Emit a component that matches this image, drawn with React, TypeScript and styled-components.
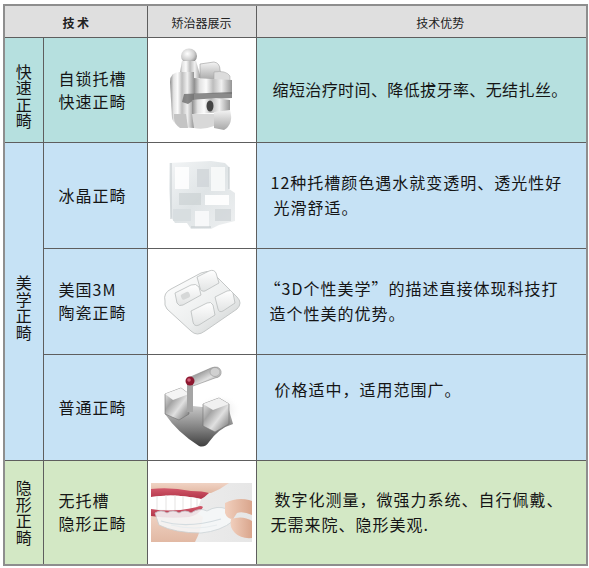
import React from "react";
import styled, { createGlobalStyle } from "styled-components";

const GlobalStyle = createGlobalStyle`
  body {
    margin: 0;
    background: #ffffff;
    font-family: "Noto Sans CJK SC", "Noto Sans", sans-serif;
    color: #151515;
  }
`;

const Page = styled.div`
  padding: 4px 0 0 3px;
`;

const Table = styled.table`
  border-collapse: collapse;
  table-layout: fixed;
  width: 583px;
  border: 2px solid #8e8e8e;
`;

const HeadRow = styled.tr`
  height: 32px;
`;

const HeadCell = styled.th<{ $bold?: boolean; $pad?: number }>`
  background: #dfdfdf;
  border: 1px solid #5e5e5e;
  font-size: 12px;
  font-weight: ${(p) => (p.$bold ? 700 : 400)};
  color: #222;
  text-align: center;
  padding: 3px 0 0 ${(p) => p.$pad ?? 0}px;
  white-space: pre;
`;

const BodyRow = styled.tr<{ $h: number }>`
  height: ${(p) => p.$h}px;
`;

const SectionCell = styled.td<{ $bg: string; $shift?: number }>`
  background: ${(p) => p.$bg};
  border: 1px solid #5e5e5e;
  vertical-align: middle;
  padding: ${(p) => p.$shift ?? 0}px 0 0 0;
`;

const VerticalText = styled.div`
  width: 16px;
  margin: 0 auto;
  font-size: 16px;
  line-height: 16.5px;
  word-break: break-all;
  text-align: center;
`;

const NameCell = styled.td<{ $bg: string }>`
  background: ${(p) => p.$bg};
  border: 1px solid #5e5e5e;
  vertical-align: middle;
  padding: 0 0 0 15px;
  font-size: 16px;
  letter-spacing: 1px;
  line-height: 23px;
`;

const ImageCell = styled.td`
  background: #ffffff;
  border: 1px solid #5e5e5e;
  vertical-align: middle;
  text-align: center;
  padding: 0;
  line-height: 0;
`;

const TextCell = styled.td<{ $bg: string; $bottom?: number; $indent?: number }>`
  background: ${(p) => p.$bg};
  border: 1px solid #5e5e5e;
  vertical-align: middle;
  padding: 0 4px ${(p) => p.$bottom ?? 0}px 14px;
  font-size: 16px;
  letter-spacing: 1px;
  line-height: 25px;
  white-space: nowrap;
`;

const Line = styled.div<{ $indent?: number; $tight?: boolean }>`
  margin-left: ${(p) => p.$indent ?? 0}px;
  letter-spacing: ${(p) => (p.$tight ? "0.4px" : "1px")};
`;

const TEAL = "#b6e0df";
const BLUE = "#c6e2f5";
const GREEN = "#d3e8c5";

const SelfLigating = () => (
  <svg width="64" height="84" viewBox="0 0 64 84">
    <defs>
      <linearGradient id="sl-body" x1="0" x2="1" y1="0" y2="0">
        <stop offset="0" stopColor="#8c8c8c" />
        <stop offset="0.15" stopColor="#e2e2e2" />
        <stop offset="0.32" stopColor="#fbfbfb" />
        <stop offset="0.5" stopColor="#bdbdbd" />
        <stop offset="0.72" stopColor="#f0f0f0" />
        <stop offset="1" stopColor="#949494" />
      </linearGradient>
      <linearGradient id="sl-v" x1="0" x2="0" y1="0" y2="1">
        <stop offset="0" stopColor="#f4f4f4" />
        <stop offset="1" stopColor="#a8a8a8" />
      </linearGradient>
      <radialGradient id="sl-knob" cx="0.4" cy="0.35" r="0.7">
        <stop offset="0" stopColor="#ffffff" />
        <stop offset="0.6" stopColor="#cfcfcf" />
        <stop offset="1" stopColor="#858585" />
      </radialGradient>
    </defs>
    <ellipse cx="19" cy="8" rx="8" ry="7.5" fill="url(#sl-knob)" />
    <path d="M12 13 L26 13 L31 30 L9 30 Z" fill="url(#sl-body)" />
    <path d="M30 16 L44 14 Q50 15 50 22 L52 30 L30 32 Z" fill="url(#sl-v)" stroke="#9a9a9a" strokeWidth="0.6" />
    <path d="M44 24 Q56 22 60 28 L60 40 L44 40 Z" fill="#dcdcdc" stroke="#a0a0a0" strokeWidth="0.5" />
    <path d="M0 34 Q0 24 10 24 L24 24 L24 80 Q4 80 2 70 Z" fill="url(#sl-body)" />
    <path d="M24 30 L62 32 L62 46 L24 46 Z" fill="url(#sl-body)" />
    <path d="M14 46 L62 44 L62 50 L24 52 L18 56 L12 54 Z" fill="#6e6e6e" opacity="0.8" />
    <path d="M22 52 L46 50 L60 52 L60 64 L22 66 Z" fill="url(#sl-body)" />
    <ellipse cx="40" cy="58" rx="3.5" ry="5.5" fill="#444" />
    <path d="M22 66 L44 66 L44 78 Q34 82 24 80 Z" fill="#d8d8d8" />
    <path d="M44 64 L60 62 Q64 76 54 82 L44 80 Z" fill="url(#sl-v)" />
    <path d="M4 66 L16 66 L18 80 L10 80 Q4 76 4 70 Z" fill="#c4c4c4" />
  </svg>
);

const CrystalBracket = () => (
  <svg width="70" height="72" viewBox="0 0 70 72">
    <defs>
      <linearGradient id="cr-g" x1="0" y1="0" x2="1" y2="1">
        <stop offset="0" stopColor="#f3f5f6" />
        <stop offset="0.5" stopColor="#dfe4e6" />
        <stop offset="1" stopColor="#eef0f1" />
      </linearGradient>
    </defs>
    <path d="M2 4 L44 2 L58 4 L62 8 L62 30 L68 34 L68 62 L52 66 L44 70 L24 70 L20 64 L8 64 L4 58 L2 30 Z" fill="url(#cr-g)" />
    <rect x="8" y="8" width="14" height="22" fill="#ffffff" opacity="0.85" />
    <rect x="30" y="10" width="12" height="18" fill="#cfd5d8" opacity="0.8" />
    <rect x="44" y="8" width="14" height="24" fill="#f8f9fa" opacity="0.9" />
    <rect x="12" y="34" width="22" height="12" fill="#c8ced1" opacity="0.6" />
    <rect x="38" y="36" width="24" height="10" fill="#ffffff" opacity="0.9" />
    <rect x="6" y="50" width="18" height="12" fill="#d6dcdf" opacity="0.8" />
    <rect x="28" y="52" width="14" height="16" fill="#f7f8f9" />
    <rect x="48" y="50" width="16" height="12" fill="#cdd3d6" opacity="0.7" />
    <path d="M4 4 L4 60 M62 8 L62 30 M24 68 L44 68" stroke="#bfc6c9" strokeWidth="1" />
  </svg>
);

const CeramicBracket = () => (
  <svg width="82" height="76" viewBox="0 0 82 76">
    <defs>
      <linearGradient id="ce-base" x1="0" y1="0" x2="1" y2="1">
        <stop offset="0" stopColor="#ffffff" />
        <stop offset="0.6" stopColor="#eceeee" />
        <stop offset="1" stopColor="#c9cccc" />
      </linearGradient>
      <linearGradient id="ce-pad" x1="0" y1="0" x2="0" y2="1">
        <stop offset="0" stopColor="#ffffff" />
        <stop offset="1" stopColor="#e2e4e4" />
      </linearGradient>
    </defs>
    <path d="M4 38 Q2 30 10 26 L40 10 Q46 7 52 10 L76 34 Q82 40 76 46 L44 68 Q36 74 30 68 L6 46 Q3 42 4 38 Z" fill="url(#ce-base)" stroke="#c4c7c7" strokeWidth="1" />
    <path d="M14 30 L30 22 Q35 20 38 24 L40 32 L22 42 Q18 44 16 40 Z" fill="url(#ce-pad)" stroke="#b9bcbc" strokeWidth="0.8" />
    <path d="M36 14 L48 8 Q53 6 55 10 L58 20 L44 28 Q40 29 39 25 Z" fill="url(#ce-pad)" stroke="#b9bcbc" strokeWidth="0.8" />
    <path d="M30 48 L46 40 Q50 38 52 42 L54 52 L38 62 Q33 64 32 59 Z" fill="url(#ce-pad)" stroke="#b9bcbc" strokeWidth="0.8" />
    <path d="M54 34 L66 28 Q70 26 72 30 L74 40 L62 48 Q58 50 57 46 Z" fill="url(#ce-pad)" stroke="#b9bcbc" strokeWidth="0.8" />
    <rect x="20" y="30" width="9" height="6" rx="2" fill="#d6d8d8" transform="rotate(-25 24 33)" />
  </svg>
);

const MetalBracket = () => (
  <svg width="78" height="82" viewBox="0 0 78 82">
    <defs>
      <linearGradient id="mb-g" x1="0" y1="0" x2="1" y2="1">
        <stop offset="0" stopColor="#f2f2f2" />
        <stop offset="0.35" stopColor="#a3a3a3" />
        <stop offset="0.6" stopColor="#e0e0e0" />
        <stop offset="1" stopColor="#6a6a6a" />
      </linearGradient>
      <linearGradient id="mb-base" x1="0" y1="0" x2="0" y2="1">
        <stop offset="0" stopColor="#c8c8c8" />
        <stop offset="0.6" stopColor="#7a7a7a" />
        <stop offset="1" stopColor="#3f3f3f" />
      </linearGradient>
      <radialGradient id="mb-sh" cx="0.5" cy="0.5" r="0.5">
        <stop offset="0" stopColor="#cfcfcf" />
        <stop offset="1" stopColor="#ffffff" stopOpacity="0" />
      </radialGradient>
    </defs>
    <ellipse cx="56" cy="44" rx="22" ry="16" fill="url(#mb-sh)" />
    <path d="M2 48 Q14 66 36 80 Q42 82 46 76 Q56 62 70 58 L66 44 L30 40 Z" fill="url(#mb-base)" />
    <path d="M2 28 L18 22 L26 28 L26 48 L16 54 L2 48 Z" fill="url(#mb-g)" stroke="#707070" strokeWidth="0.6" />
    <path d="M2 28 L18 22 L26 28 L10 34 Z" fill="#f4f4f4" />
    <path d="M40 38 L56 32 L66 38 L66 58 L52 66 L40 60 Z" fill="url(#mb-g)" stroke="#707070" strokeWidth="0.6" />
    <path d="M40 38 L56 32 L66 38 L50 44 Z" fill="#f0f0f0" />
    <path d="M24 16 L30 16 L30 46 L24 46 Z" fill="#a5a5a5" />
    <path d="M25 12 L48 2 Q56 -1 58 5 Q59 11 52 12 L30 20 Z" fill="url(#mb-g)" stroke="#7a7a7a" strokeWidth="0.5" />
    <ellipse cx="52" cy="6" rx="5" ry="4.5" fill="#d0d0d0" stroke="#8a8a8a" strokeWidth="0.5" />
    <circle cx="27" cy="15" r="4.5" fill="#8d1830" />
    <circle cx="26" cy="14" r="1.8" fill="#d2607a" />
  </svg>
);

const SmilePhoto = () => (
  <svg width="101" height="59" viewBox="0 0 101 59">
    <defs>
      <linearGradient id="sp-bg" x1="0" x2="1">
        <stop offset="0" stopColor="#f0f0f0" />
        <stop offset="1" stopColor="#e6e6e6" />
      </linearGradient>
      <linearGradient id="sp-skin" x1="0" x2="0" y1="0" y2="1">
        <stop offset="0" stopColor="#f0d3c4" />
        <stop offset="1" stopColor="#e2b9a4" />
      </linearGradient>
      <linearGradient id="sp-lip" x1="0" x2="0" y1="0" y2="1">
        <stop offset="0" stopColor="#d2586a" />
        <stop offset="1" stopColor="#b03448" />
      </linearGradient>
      <linearGradient id="sp-finger" x1="0" x2="1">
        <stop offset="0" stopColor="#f1cfbd" />
        <stop offset="1" stopColor="#d9a58c" />
      </linearGradient>
    </defs>
    <rect width="101" height="59" fill="url(#sp-bg)" />
    <path d="M0 0 L78 0 Q70 6 60 10 L0 10 Z" fill="url(#sp-skin)" />
    <path d="M0 32 Q24 36 46 30 L52 34 Q50 48 44 59 L0 59 Z" fill="url(#sp-skin)" />
    <path d="M0 6 Q20 4 40 8 Q52 8 58 10 Q54 14 50 16 Q24 10 0 14 Z" fill="url(#sp-lip)" />
    <path d="M0 14 Q24 10 50 16 Q48 24 44 26 Q20 28 0 26 Z" fill="#ffffff" />
    <path d="M6 13 L6 27 M15 12 L15 28 M24 12 L24 28 M32 13 L32 28 M40 14 L40 27 M46 15 L46 25" stroke="#dedcda" strokeWidth="0.8" />
    <path d="M0 26 Q22 30 46 24 Q50 22 52 24 Q48 32 38 34 Q18 36 0 33 Z" fill="url(#sp-lip)" />
    <path d="M4 30 Q10 26 16 30 Q22 26 28 30 Q34 26 40 30 Q48 24 56 28 Q66 22 76 26 Q84 30 82 38 Q70 48 50 50 Q24 50 8 42 Z" fill="#f6f8f9" opacity="0.88" stroke="#c8d0d4" strokeWidth="0.8" />
    <path d="M10 38 Q36 46 70 36" stroke="#d4dce0" strokeWidth="1.2" fill="none" />
    <path d="M20 42 Q44 48 66 42" stroke="#e8edef" strokeWidth="1" fill="none" />
    <path d="M74 20 Q86 14 98 17 L101 18 L101 32 Q92 28 86 30 L82 36 Q76 36 74 30 Z" fill="url(#sp-finger)" />
    <path d="M80 36 Q92 32 101 38 L101 55 Q90 56 84 50 Q78 44 80 36 Z" fill="url(#sp-finger)" />
  </svg>
);

export default function App() {
  return (
    <Page>
      <GlobalStyle />
      <Table>
        <colgroup>
          <col style={{ width: 39 }} />
          <col style={{ width: 104 }} />
          <col style={{ width: 109 }} />
          <col style={{ width: 331 }} />
        </colgroup>
        <thead>
          <HeadRow>
            <HeadCell colSpan={2} $bold>
              {"技 术"}
            </HeadCell>
            <HeadCell>矫治器展示</HeadCell>
            <HeadCell $pad={38}>技术优势</HeadCell>
          </HeadRow>
        </thead>
        <tbody>
          <BodyRow $h={105}>
            <SectionCell $bg={TEAL} $shift={12}>
              <VerticalText>快速正畸</VerticalText>
            </SectionCell>
            <NameCell $bg={TEAL}>
              自锁托槽
              <br />
              快速正畸
            </NameCell>
            <ImageCell>
              <SelfLigating />
            </ImageCell>
            <TextCell $bg={TEAL}>
              <Line $indent={2} $tight>
                缩短治疗时间、降低拔牙率、无结扎丝。
              </Line>
            </TextCell>
          </BodyRow>
          <BodyRow $h={106}>
            <SectionCell $bg={BLUE} rowSpan={3} $shift={12}>
              <VerticalText>美学正畸</VerticalText>
            </SectionCell>
            <NameCell $bg={BLUE}>冰晶正畸</NameCell>
            <ImageCell>
              <CrystalBracket />
            </ImageCell>
            <TextCell $bg={BLUE}>
              <Line>12种托槽颜色遇水就变透明、透光性好</Line>
              <Line $indent={3}>光滑舒适。</Line>
            </TextCell>
          </BodyRow>
          <BodyRow $h={106}>
            <NameCell $bg={BLUE}>
              美国3M
              <br />
              陶瓷正畸
            </NameCell>
            <ImageCell>
              <CeramicBracket />
            </ImageCell>
            <TextCell $bg={BLUE}>
              <Line $indent={-6}>“3D个性美学”的描述直接体现科技打</Line>
              <Line $indent={-1}>造个性美的优势。</Line>
            </TextCell>
          </BodyRow>
          <BodyRow $h={106}>
            <NameCell $bg={BLUE}>普通正畸</NameCell>
            <ImageCell>
              <MetalBracket />
            </ImageCell>
            <TextCell $bg={BLUE} $bottom={36}>
              <Line $indent={4}>价格适中，适用范围广。</Line>
            </TextCell>
          </BodyRow>
          <BodyRow $h={105}>
            <SectionCell $bg={GREEN}>
              <VerticalText>隐形正畸</VerticalText>
            </SectionCell>
            <NameCell $bg={GREEN}>
              无托槽
              <br />
              隐形正畸
            </NameCell>
            <ImageCell>
              <SmilePhoto />
            </ImageCell>
            <TextCell $bg={GREEN}>
              <Line $indent={4}>数字化测量，微强力系统、自行佩戴、</Line>
              <Line $indent={0}>无需来院、隐形美观.</Line>
            </TextCell>
          </BodyRow>
        </tbody>
      </Table>
    </Page>
  );
}
